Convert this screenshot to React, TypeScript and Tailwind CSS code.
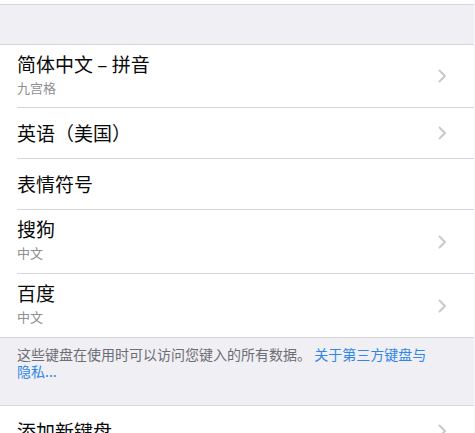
import { FC } from 'react';

interface RowProps {
  title: string;
  subtitle?: string;
  chevron?: boolean;
  last?: boolean;
  short?: boolean;
}

const Chevron: FC = () => (
  <svg width="9" height="14" viewBox="0 0 9 14" fill="none" className="shrink-0">
    <path d="M1.5 1.5L7 7l-5.5 5.5" stroke="#c7c7cc" strokeWidth="1.8" strokeLinecap="round" strokeLinejoin="round" />
  </svg>
);

const Row: FC<RowProps> = ({ title, subtitle, chevron = true, last = false, short = false }) => {
  const height = subtitle ? (short || last ? 'h-[63px]' : 'h-[64px]') : last ? 'h-[50px]' : 'h-[51px]';
  return (
    <div className="pl-[17px] bg-white">
      <div className={`flex items-center pr-[27px] ${height} ${last ? '' : 'border-b border-[#d6d5da]'}`}>
        <div className={`flex-1 min-w-0 flex flex-col ${subtitle ? 'self-start pt-[7px]' : ''}`}>
          <div className="text-[19px] leading-[24px] text-[#0a0a0a]">{title}</div>
          {subtitle && <div className="mt-[4px] text-[13px] leading-[16px] text-[#8e8e93]">{subtitle}</div>}
        </div>
        {chevron && <Chevron />}
      </div>
    </div>
  );
};

const App: FC = () => {
  return (
    <div className="w-[475px] h-[433px] overflow-hidden bg-[#efeff4] font-['Noto_Sans_CJK_SC','Noto_Sans',sans-serif] border-r border-[#f7f7f9]">
      <div className="h-[5px] bg-white border-b border-[#d6d5da]" />
      <div className="h-[40px] border-b border-[#d6d5da]" />

      <Row title="简体中文 – 拼音" subtitle="九宫格" short />
      <Row title="英语（美国）" />
      <Row title="表情符号" chevron={false} />
      <Row title="搜狗" subtitle="中文" />
      <Row title="百度" subtitle="中文" last />

      <div className="border-t border-[#d6d5da] border-b h-[69px] pl-[17px] pr-[34px] pt-[8px] text-[14px] leading-[17px] text-[#6d6d72]">
        这些键盘在使用时可以访问您键入的所有数据。 <span className="text-[#2f86e6]">关于第三方键盘与隐私...</span>
      </div>

      <Row title="添加新键盘" last />
    </div>
  );
};

export default App;
